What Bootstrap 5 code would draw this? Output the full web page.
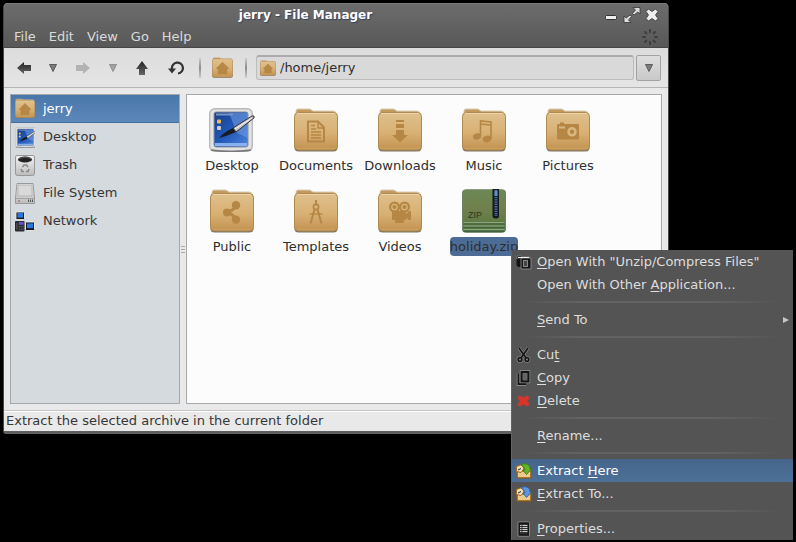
<!DOCTYPE html>
<html lang="en">
<head>
<meta charset="utf-8">
<meta name="viewport" content="width=device-width, initial-scale=1">
<title>jerry - File Manager</title>
<link rel="stylesheet" href="https://cdn.jsdelivr.net/npm/bootstrap@5.3.0/dist/css/bootstrap.min.css">
<style>
body{background:#000;font-family:"DejaVu Sans",sans-serif;font-size:13px;line-height:20px;color:#363636}
button{font:inherit;line-height:inherit}
svg{display:block;flex:none}
.fm-window{margin:3px 127px 0 3px;height:calc(100vh - 111px);min-height:300px;border:1px solid #4a4a4a;border-top:0;border-bottom:3px solid #606060;border-radius:5px 5px 3px 3px;background:#e9e9e9}
.fm-head{background:linear-gradient(#6c6c6c,#585858);border-top:1px solid #7b7b7b;border-bottom:1px solid #484548;color:#dadada;border-radius:4px 4px 0 0}
.fm-title{height:21px;padding-right:9px}
.fm-title h1{font-size:12px;line-height:20px;font-weight:700;color:#fff;text-shadow:1px 1px 1px #33435c}
.plain{border:0;background:transparent;padding:0;color:inherit;display:flex;align-items:center;justify-content:center}
.fm-menus{gap:13px;padding:1px 9px 0 10px;height:22px;text-shadow:0 1px 1px #444}
.fm-tools{background:linear-gradient(#dcdcdc,#e5e5e5);border-bottom:1px solid #b5b5b5;height:40px;padding:0 7px 0 5px}
.t-wide{width:30px}.t-drop{width:28px}.t-fwd{width:32px}.t-reload{width:38px}.t-home{width:34px}
.t-rule{width:2px;height:20px;margin:0 4px;background:linear-gradient(#ccc,#8b8b8b 50%,#ccc)}
.t-rule.end{margin:0 9px 0 6px}
.fm-path{height:25px;border:1px solid #bcbcbc;border-top:2px solid #ababab;border-radius:3px;background:#d9d9d9;padding-left:3px;gap:4px}
.fm-path input{border:0;background:transparent;outline:0;padding:0;min-width:0;color:#2e2e2e}
.path-go{width:25px;height:26px;border:1px solid #a2a2a2;border-radius:2px;background:linear-gradient(#dedede,#c9c9c9);margin-left:2px}
.fm-body{padding:6px}
.fm-side{width:170px;border:1px solid #a5a8aa;background:#d5dade}
.fm-side a{height:28px;padding-left:4px;gap:8px;color:#363636}
.fm-side a.on{background:linear-gradient(#4a77aa,#5b87ba);color:#fff;border-bottom:1px solid #44709f}
.fm-grip{width:6px;gap:2px}
.fm-grip i{width:4px;height:1px;background:#aaa}
.fm-files{border:1px solid #a6a8aa;background:#fcfcfc;padding:12px 3px 0;align-content:flex-start;min-width:0}
.fm-item{width:84px;height:81px;padding-top:1px}
.fm-item a{color:#2e2e2e;gap:4px;display:flex;flex-direction:column;align-items:center;text-decoration:none;white-space:nowrap}
.fm-item .picked{background:#4c6c95;border-radius:4px;height:19px;line-height:19px}
.fm-status{border-top:1px solid #c4c4c4;box-shadow:inset 0 1px #fff;padding-left:2px;line-height:20px}
.ctx{position:absolute;top:250px;right:3px;width:282px;background:#545454;border-left:1px solid #636363;color:#dedede}
.ctx button{width:100%;height:23px;padding-left:4px;gap:5px;justify-content:flex-start}
.ctx button.on{background:linear-gradient(#46658a,#4c7098);color:#fff}
.ctx hr{margin:5px 12px;height:2px;border:0;opacity:1;background:linear-gradient(90deg,transparent,#626262 20%,#626262 75%,transparent)}
.ctx .gap-icon{width:16px}
.ctx u{text-underline-offset:2px;text-decoration-thickness:1px}
</style>
</head>
<body>
<svg width="0" height="0" class="position-absolute" aria-hidden="true">
<defs>
<linearGradient id="gF" x2="0" y2="1"><stop offset="0" stop-color="#dfc08d"/><stop offset=".55" stop-color="#d8b073"/><stop offset="1" stop-color="#c29250"/></linearGradient>
<linearGradient id="gB" x2="1" y2="1"><stop offset="0" stop-color="#173f86"/><stop offset=".5" stop-color="#2158b8"/><stop offset="1" stop-color="#4e83d8"/></linearGradient>
<linearGradient id="gZ" x2="0" y2="1"><stop offset="0" stop-color="#6b8856"/><stop offset=".45" stop-color="#71804c"/><stop offset=".75" stop-color="#607b45"/><stop offset="1" stop-color="#4f7647"/></linearGradient>
<linearGradient id="gM" x2="0" y2="1"><stop offset="0" stop-color="#f2f2f2"/><stop offset="1" stop-color="#bcbcbc"/></linearGradient>
<linearGradient id="gK" x2="0" y2="1"><stop offset="0" stop-color="#222"/><stop offset="1" stop-color="#666"/></linearGradient>
</defs>
<symbol id="folder" viewBox="0 0 44 44">
<path d="M2 8V3Q2 1 4 1H16L19 3H39Q42 3 42 6V10H2Z" fill="#c39a5c" stroke="#d9cdb8" stroke-width="1"/>
<rect x=".5" y="5.5" width="43" height="38" rx="4" fill="#7d7468"/>
<rect x=".5" y="4.500" width="43" height="37.500" rx="4" fill="url(#gF)" stroke="#b18a50" stroke-width="1"/>
<path d="M3 5.500H41" stroke="#ecd4a8"/><path d="M3 40.500H41" stroke="#cda25f"/>
</symbol>
<symbol id="home" viewBox="0 0 44 44"><use href="#folder"/><path d="M22 11L35 24H31V35H13V24H9Z" fill="#b68745" stroke="#a97a39"/></symbol>
<symbol id="desk" viewBox="0 0 46 44">
<rect x=".7" y=".7" width="42.600" height="42.600" rx="5" fill="#e2e2e2" stroke="#b9b9b9" stroke-width="1.400"/>
<path d="M2 42Q22 45 42 42" stroke="#777" fill="none" stroke-width="1.500"/>
<rect x="5" y="4" width="34" height="35" rx="2" fill="url(#gB)" stroke="#8c929c" stroke-width="1"/>
<path d="M20 5H39V30L28 25Z" fill="#6f9ae0" opacity=".6"/><path d="M7 6.500H24" stroke="#7795c8" stroke-width="2"/><rect x="6" y="35" width="32" height="3" fill="#88b0ee"/>
<rect x="8" y="11.500" width="4" height="4" rx="1" fill="#f0b75c"/><rect x="8" y="18" width="4" height="4" rx="1" fill="#ccc"/>
<path d="M10 30Q15 24 24 20L27 24Q18 28 10 30Z" fill="#171b25"/><path d="M24 20L43 8Q46 7 45 10L27 24Z" fill="#c3c3c3" stroke="#333" stroke-width="1"/><path d="M26 21L43 10" stroke="#f6f6f6" stroke-width="1"/>
</symbol>
<symbol id="trash" viewBox="0 0 20 21"><path d="M.5 2Q.5 .5 2 .5H18Q19.500 .5 19.500 2V18.500Q19.500 20.500 17.500 20.500H2.500Q.5 20.500 .5 18.500Z" fill="url(#gM)" stroke="#979797"/><ellipse cx="10" cy="4.500" rx="7" ry="3" fill="#222"/><path d="M4 3.500Q10 1 16 3.500" stroke="#555" fill="none"/><path d="M7.500 12L9 10H11.500L13 12M14 14L13 16.500H11M9 16.500H7L6 14" fill="none" stroke="#888" stroke-width="1.600"/></symbol>
<symbol id="disk" viewBox="0 0 20 21"><path d="M2 .5H18L19.500 15V20.500H.5V15Z" fill="url(#gM)" stroke="#999"/><rect x="3" y="2" width="14" height="11" fill="#d9d9d9" stroke="#b5b5b5"/><path d="M1 15.500H19" stroke="#a5a5a5"/><circle cx="4" cy="18" r="1" fill="#a77"/><path d="M13.500 16.500V19M15.500 16.500V19M17.500 16.500V19" stroke="#555"/></symbol>
<symbol id="net" viewBox="0 0 21 21"><rect x="1" y=".5" width="9" height="8" rx="1" fill="#15171c" stroke="#eee"/><rect x="2.500" y="1.500" width="6" height="5" fill="#2b78dd"/><rect x="11" y="11" width="9.500" height="9" rx="1" fill="#15171c" stroke="#eee"/><rect x="12.500" y="12.500" width="6.500" height="5" fill="#2b78dd"/><rect x="0" y="10" width="10" height="11" rx="1" fill="#2a2a2e"/><rect x="4" y="11" width="5" height="3" fill="#6c4fd0"/><path d="M4 16H9M4 18.500H9" stroke="#8a8a8a" stroke-dasharray="1 1"/><path d="M2 12V19" stroke="#666"/></symbol>
<symbol id="tri" viewBox="0 0 8 8"><path d="M.5 .5H7.500L4 7.500Z" fill="#7c7c7c" stroke="#5c5c5c"/></symbol>
<symbol id="extract" viewBox="0 0 16 16"><path d="M1 6L3 4H13L15 6V15H1Z" fill="#c98d32" stroke="#8e5a10"/><path d="M2 9H14V14H2Z" fill="#ecc98e"/><path d="M.5 3.500L6 1.500L8 6L5 9.500L.5 8.500Z" fill="#f4dfb4" stroke="#a26a1c"/><path d="M2 7L5 5.500" stroke="#222" stroke-width="1"/></symbol>
</svg>

<main class="fm-window d-flex flex-column">
<header class="fm-head">
<div class="fm-title d-flex align-items-center">
<h1 class="flex-grow-1 text-center m-0 ps-1">jerry - File Manager</h1>
<button class="plain" aria-label="Minimize"><svg width="16" height="16"><rect x="2.500" y="8.500" width="11" height="4" rx="1" fill="#eee" stroke="#333"/></svg></button>
<button class="plain mx-1" aria-label="Maximize"><svg width="18" height="16" viewBox="0 0 18 16"><path d="M10 .5H17V7L14.800 5L11 8L9.500 6.500L12.500 3ZM8 15.500H1V9L3.200 11L7 8L8.500 9.500L5.500 13Z" fill="#ddd" stroke="#333" stroke-width=".8"/></svg></button>
<button class="plain" aria-label="Close"><svg width="14" height="14" viewBox="0 0 14 14"><path d="M3.500 1L7 3.500L10.500 1L13 3.500L10.500 7L13 10.500L10.500 13L7 10.500L3.500 13L1 10.500L3.500 7L1 3.500Z" fill="#eee" stroke="#333" stroke-width=".8"/></svg></button>
</div>
<nav class="fm-menus d-flex align-items-center" aria-label="Menu">
<button class="plain">File</button><button class="plain">Edit</button><button class="plain">View</button><button class="plain">Go</button><button class="plain">Help</button>
<svg class="ms-auto" width="18" height="18" viewBox="-9 -9 18 18" stroke="#3d3d3d" stroke-width="2" stroke-linecap="round"><path d="M0-7V-5M0 7V5M-7 0H-5M7 0H5M-5-5L-3.600-3.600M5 5L3.600 3.600M-5 5L-3.600 3.600M5-5L3.600-3.600"/></svg>
</nav>
</header>
<div class="fm-tools d-flex align-items-center" role="toolbar">
<button class="plain t-wide" aria-label="Back"><svg width="14" height="12" viewBox="0 0 14 12"><path d="M0 6L7 0V3H14V9H7V12Z" fill="url(#gK)"/></svg></button>
<button class="plain t-drop" aria-label="Back history"><svg width="8" height="8"><use href="#tri"/></svg></button>
<button class="plain t-fwd" aria-label="Forward"><svg width="14" height="12" viewBox="0 0 14 12"><path d="M14 6L7 0V3H0V9H7V12Z" fill="#b3b3b3"/></svg></button>
<button class="plain t-drop" aria-label="Forward history"><svg width="8" height="8" opacity=".6"><use href="#tri"/></svg></button>
<button class="plain t-wide" aria-label="Up"><svg width="12" height="14" viewBox="0 0 12 14"><path d="M6 0L12 8H9V14H3V8H0Z" fill="url(#gK)"/></svg></button>
<button class="plain t-reload" aria-label="Reload"><svg width="16" height="14" viewBox="0 0 16 14"><path d="M4 8A5.500 5.500 0 1 1 10 12.500" fill="none" stroke="#333" stroke-width="2.200"/><path d="M0 7.500H8L4 12.500Z" fill="#333"/></svg></button>
<span class="t-rule"></span>
<button class="plain t-home" aria-label="Home"><svg width="21" height="21"><use href="#home"/></svg></button>
<span class="t-rule end"></span>
<div class="fm-path d-flex align-items-center flex-grow-1"><svg width="16" height="16"><use href="#home"/></svg><input class="flex-grow-1" aria-label="Location" value="/home/jerry"></div>
<button class="plain path-go" aria-label="Recent locations"><svg width="8" height="8"><use href="#tri"/></svg></button>
</div>
<div class="fm-body d-flex flex-grow-1">
<nav class="fm-side flex-shrink-0" aria-label="Places">
<a href="#" class="on d-flex align-items-center text-decoration-none"><svg width="20" height="21"><use href="#home"/></svg>jerry</a>
<a href="#" class="d-flex align-items-center text-decoration-none"><svg width="20" height="21" viewBox="0 0 42 44"><use href="#desk" width="46" height="44"/></svg>Desktop</a>
<a href="#" class="d-flex align-items-center text-decoration-none"><svg width="20" height="21"><use href="#trash"/></svg>Trash</a>
<a href="#" class="d-flex align-items-center text-decoration-none"><svg width="20" height="21"><use href="#disk"/></svg>File System</a>
<a href="#" class="d-flex align-items-center text-decoration-none"><svg width="20" height="21"><use href="#net"/></svg>Network</a>
</nav>
<div class="fm-grip flex-shrink-0 d-flex flex-column align-items-center justify-content-center"><i></i><i></i><i></i></div>
<section class="fm-files d-flex flex-wrap flex-grow-1" aria-label="Files">
<div class="fm-item"><a href="#"><svg width="46" height="44"><use href="#desk"/></svg>Desktop</a></div>
<div class="fm-item"><a href="#"><svg width="44" height="44" viewBox="0 0 44 44"><use href="#folder"/><path d="M14 13.500H24L30 19.500V33.500H14Z" fill="none" stroke="#b58644" stroke-width="2"/><path d="M24 13V20H30M17 17.500H21M17 21H22M17 24H27M17 27H27M17 30H27" fill="none" stroke="#b58644" stroke-width="1.400"/></svg>Documents</a></div>
<div class="fm-item"><a href="#"><svg width="44" height="44" viewBox="0 0 44 44"><use href="#folder"/><path d="M18 12H26V14H18ZM18 16H26V20H18ZM18 22H26V27H30L22 34.500L14 27H18Z" fill="#b58644"/></svg>Downloads</a></div>
<div class="fm-item"><a href="#"><svg width="44" height="44" viewBox="0 0 44 44"><use href="#folder"/><ellipse cx="15" cy="28.500" rx="4.200" ry="3" transform="rotate(-15 15 28.500)" fill="#b58644"/><ellipse cx="25" cy="31" rx="4.200" ry="3.300" transform="rotate(-15 25 31)" fill="#b58644"/><path d="M18.500 28V13L29 14V31M18.500 16L29 17" fill="none" stroke="#b58644" stroke-width="1.600"/></svg>Music</a></div>
<div class="fm-item"><a href="#"><svg width="44" height="44" viewBox="0 0 44 44"><use href="#folder"/><rect x="11" y="16" width="22" height="15.500" rx="1" fill="#b58644"/><path d="M14 15.500H18" stroke="#b58644" stroke-width="2"/><path d="M13 19.500H19" stroke="#dab981" stroke-width="2"/><circle cx="26" cy="23.800" r="3.500" fill="none" stroke="#dab981" stroke-width="2.500"/></svg>Pictures</a></div>
<div class="fm-item"><a href="#"><svg width="44" height="44" viewBox="0 0 44 44"><use href="#folder"/><path d="M26 16.500Q23 22 17 23.300Q23 25 26 30.500" fill="none" stroke="#b58644" stroke-width="3"/><g fill="#b58644"><circle cx="26" cy="16.300" r="4.200"/><circle cx="26" cy="30.600" r="4.200"/><circle cx="17" cy="23.400" r="4"/></g></svg>Public</a></div>
<div class="fm-item"><a href="#"><svg width="44" height="44" viewBox="0 0 44 44"><use href="#folder"/><g fill="none" stroke="#b58644"><path d="M22 11V15" stroke-width="2"/><circle cx="22" cy="18" r="2.600" stroke-width="1.600"/><path d="M20.500 20.500L16.500 34.500M23.500 20.500L27.500 34.500" stroke-width="2"/><path d="M15.500 25H28.500" stroke-width="1.300"/></g></svg>Templates</a></div>
<div class="fm-item"><a href="#"><svg width="44" height="44" viewBox="0 0 44 44"><use href="#folder"/><g fill="#b58644"><circle cx="16.500" cy="18" r="5.500"/><circle cx="26.500" cy="18" r="5.500"/><path d="M14 22H28V25L31 22H33V31H31L28 29V31H26V34H17V31H14Z"/></g><g fill="none" stroke="#d8b57a" stroke-width="1.300"><circle cx="16.500" cy="18" r="2.700"/><circle cx="26.500" cy="18" r="2.700"/></g></svg>Videos</a></div>
<div class="fm-item"><a href="#"><svg width="44" height="44" viewBox="0 0 44 44"><rect x=".5" y=".8" width="43" height="42.500" rx="3" fill="url(#gZ)" stroke="#6f8267"/><path d="M1.500 33.500H42.500M1.500 37H42.500M1.500 40.500H42.500" stroke="#92a578" stroke-width="1"/><path d="M1.500 35H42.500M1.500 38.500H42.500M1.500 42.500H42.500" stroke="#3f6140" stroke-width="1"/><path d="M30.500 0H37V27Q37 29.500 34 29.500Q30.500 29.500 30.500 27Z" fill="#14181c"/><path d="M34 1V27" stroke="#4d74a8" stroke-width="3" stroke-dasharray="1.300 1"/><rect x="32.500" y="2" width="3" height="5" fill="#5f8dc8"/><text x="6" y="29" font-family="Liberation Sans,sans-serif" font-size="9" fill="#29371f">ZIP</text></svg><span class="picked">holiday.zip</span></a></div>
</section>
</div>
<footer class="fm-status">Extract the selected archive in the current folder</footer>
</main>

<div class="ctx" role="menu">
<button class="plain" role="menuitem"><svg width="16" height="16" viewBox="0 0 16 16"><path d="M1 2H5L6 3H14V5H1Z" fill="#111" stroke="#999" stroke-width=".6"/><path d="M.5 5H12V13H3Q.5 13 .5 10Z" fill="#141414"/><rect x="5" y="4" width="10" height="11" rx="1" fill="#161616" stroke="#aaa" stroke-width=".7"/><rect x="7.500" y="6.500" width="4" height="6" fill="#444" stroke="#888"/><path d="M2 3.500H13" stroke="#eee"/></svg><span><u>O</u>pen With "Unzip/Compress Files"</span></button>
<button class="plain" role="menuitem"><span class="gap-icon"></span><span>Open With Other <u>A</u>pplication...</span></button>
<hr>
<button class="plain" role="menuitem"><span class="gap-icon"></span><span class="flex-grow-1 text-start"><u>S</u>end To</span><svg class="me-1" width="6" height="6"><path d="M0 0L6 3L0 6Z" fill="#c5c5c5"/></svg></button>
<hr>
<button class="plain" role="menuitem"><svg width="16" height="16" viewBox="0 0 16 16"><g fill="none" stroke="#999" stroke-width="3"><path d="M3 1L10 11M12 1L5 11"/><circle cx="4" cy="12.500" r="1.800"/><circle cx="11" cy="12.500" r="1.800"/></g><g fill="none" stroke="#161616" stroke-width="1.800"><path d="M3 1L10 11M12 1L5 11"/><circle cx="4" cy="12.500" r="1.800"/><circle cx="11" cy="12.500" r="1.800"/></g></svg><span>Cu<u>t</u></span></button>
<button class="plain" role="menuitem"><svg width="16" height="16" viewBox="0 0 16 16"><path d="M2.500 4V14H10" fill="none" stroke="#999" stroke-width="3.400"/><path d="M2.500 4V14H10" fill="none" stroke="#151515" stroke-width="2"/><rect x="5.500" y="2" width="7" height="9.500" fill="#666" stroke="#999" stroke-width="3.400"/><rect x="5.500" y="2" width="7" height="9.500" fill="#666" stroke="#151515" stroke-width="2"/></svg><span><u>C</u>opy</span></button>
<button class="plain" role="menuitem"><svg width="16" height="16" viewBox="0 0 16 16"><path d="M3.500 2.500L7.500 4.500L11.500 2.500L13.500 4.500L11.500 8L13.500 11.500L11.500 13.500L7.500 11.500L3.500 13.500L1.500 11.500L3.500 8L1.500 4.500Z" fill="#d9342a" stroke="#98453f"/></svg><span><u>D</u>elete</span></button>
<hr>
<button class="plain" role="menuitem"><span class="gap-icon"></span><span><u>R</u>ename...</span></button>
<hr>
<button class="plain on" role="menuitem"><svg width="16" height="16" viewBox="0 0 16 16"><use href="#extract"/><path d="M5 2Q8 -.5 12 1.500Q14.500 3.500 14 6H15.500L10.500 11.500L6.500 7H9Q9 4 5 2Z" fill="#62b52b" stroke="#35770f" stroke-width=".8"/></svg><span>Extract <u>H</u>ere</span></button>
<button class="plain" role="menuitem"><svg width="16" height="16" viewBox="0 0 16 16"><use href="#extract"/><path d="M5 2Q8 -.5 12 1.500Q14.500 3.500 14 6H15.500L10.500 11.500L6.500 7H9Q9 4 5 2Z" fill="#5c96dc" stroke="#2a5ca5" stroke-width=".8"/></svg><span><u>E</u>xtract To...</span></button>
<hr>
<button class="plain" role="menuitem"><svg width="16" height="16" viewBox="0 0 16 16"><rect x="2" y=".8" width="11.500" height="14.500" rx="1" fill="#161616" stroke="#999" stroke-width=".8"/><rect x="4" y="3" width="7.500" height="10" fill="#333"/><path d="M4 4.500H5.500M4 6.500H5.500M4 8.500H5.500M4 10.500H5.500M6.500 4.500H11.500M6.500 6.500H11.500M6.500 8.500H11.500M6.500 10.500H11.500" stroke="#ccc"/></svg><span><u>P</u>roperties...</span></button>
</div>
<script src="https://cdn.jsdelivr.net/npm/bootstrap@5.3.0/dist/js/bootstrap.bundle.min.js"></script>
</body>
</html>
